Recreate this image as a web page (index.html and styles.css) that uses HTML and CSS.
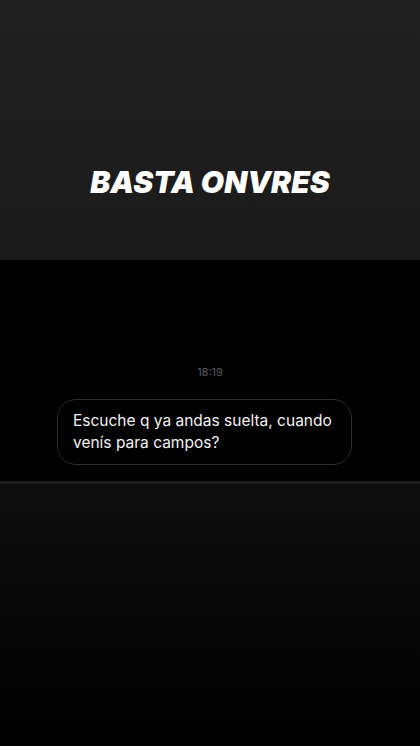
FILE: index.html
```html
<!DOCTYPE html>
<html lang="es">
<head>
    <meta charset="UTF-8">
    <meta name="viewport" content="width=device-width, initial-scale=1.0">
    <title>Basta onvres</title>
    <link rel="stylesheet" href="styles.css">
</head>
<body>
    <div class="story">
        <header class="title-card">
            <h1>BASTA ONVRES</h1>
        </header>

        <section class="chat">
            <p class="time">18:19</p>
            <div class="bubble">Escuche q ya andas suelta, cuando venís para campos?</div>
        </section>

        <div class="bottom"></div>
    </div>
</body>
</html>
```

FILE: styles.css
```css
/* Reset */
* {
    margin: 0;
    padding: 0;
    box-sizing: border-box;
}

body {
    width: 420px;
    height: 746px;
    background: #000;
    font-family: 'Inter', 'Liberation Sans', sans-serif;
    overflow: hidden;
}

.story {
    display: flex;
    flex-direction: column;
    height: 100%;
}

/* Top title card */
.title-card {
    height: 260px;
    display: flex;
    justify-content: center;
    align-items: flex-start;
    padding-top: 164px;
    background: linear-gradient(180deg, #202020, #1b1b1b);
}

h1 {
    font-family: 'Inter', 'Liberation Sans', sans-serif;
    font-size: 30px;
    font-weight: 900;
    font-style: italic;
    color: #fff;
    letter-spacing: 0;
}

/* Chat area */
.chat {
    height: 221px;
    padding: 105px 68px 0 57px;
    display: flex;
    flex-direction: column;
    background: #000;
}

.time {
    text-align: center;
    font-size: 11px;
    color: #5e5e5e;
    padding-left: 11px;
    margin-bottom: 20px;
}

.bubble {
    border: 1px solid #2c2c2c;
    border-radius: 19px;
    padding: 10px 12px 10px 15px;
    font-size: 15.5px;
    line-height: 22px;
    color: #f2f2f2;
}

/* Bottom fade */
.bottom {
    flex: 1;
    border-top: 3px solid #1c1c1c;
    background: linear-gradient(180deg, #0d0d0d, #010101);
}
```
